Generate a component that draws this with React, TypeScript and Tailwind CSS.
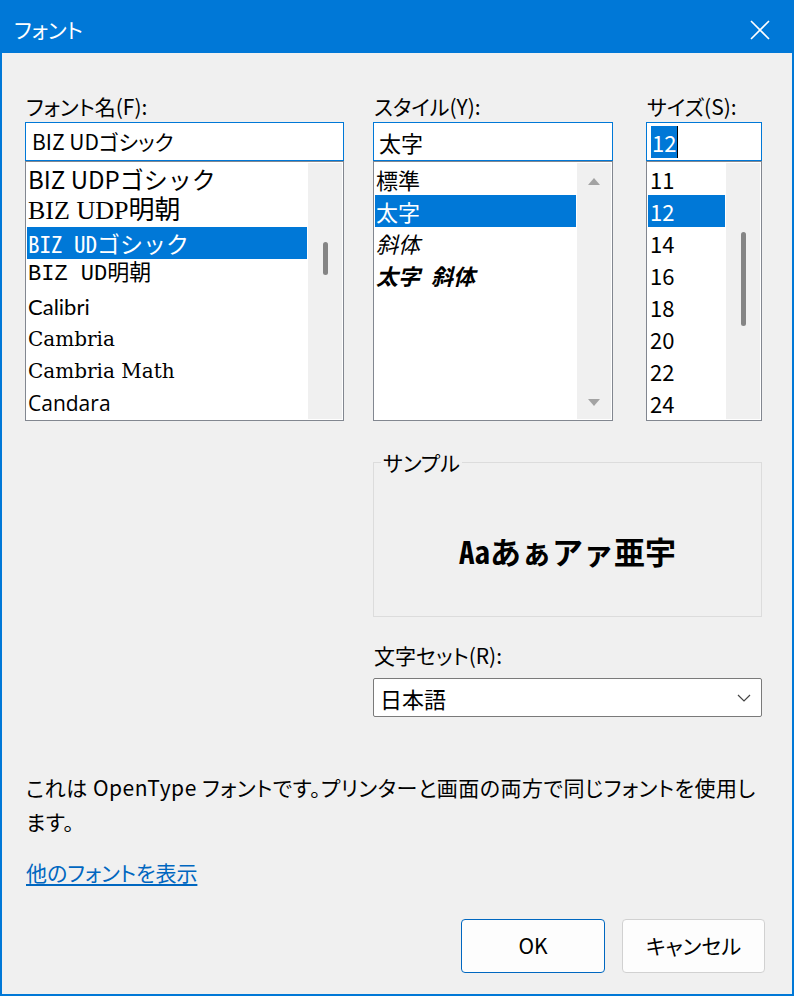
const ui = "font-['Noto_Sans_CJK_JP',sans-serif] [font-feature-settings:'palt']";

function Thumb({ top, height }: { top: number; height: number }) {
  return <div className="w-[5px] rounded-full bg-[#858585]" style={{ marginTop: top, height }} />;
}

function Row({ children, selected, className = '' }: { children: React.ReactNode; selected?: boolean; className?: string }) {
  return (
    <div
      className={
        'h-[32px] shrink-0 flex items-center whitespace-nowrap leading-[32px] ' +
        (selected ? 'bg-[#0078d7] text-white ' : 'text-black ') +
        className
      }
    >
      {children}
    </div>
  );
}

function Label({ children }: { children: React.ReactNode }) {
  return <div className={`${ui} h-[28px] leading-[28px] text-[21px] pl-[1px]`}>{children}</div>;
}

export default function App() {
  return (
    <div className="w-[794px] h-[996px] bg-[#f0f0f0] border-2 border-[#0078d7] flex flex-col text-black overflow-hidden">
      {/* title bar */}
      <div className="h-[51px] shrink-0 bg-[#0078d7] flex items-center justify-between pl-[12px] pr-[22px] text-white">
        <span className={`${ui} text-[21px] leading-none mt-[4px]`}>フォント</span>
        <svg width="20" height="20" viewBox="0 0 20 20" className="mt-[4px]">
          <path d="M1 1 L19 19 M19 1 L1 19" stroke="white" strokeWidth="1.6" fill="none" />
        </svg>
      </div>

      <div className="flex-1 flex flex-col pl-[23px] pr-[27px]">
        <div className="flex mt-[39px]">
          {/* font name */}
          <div className="w-[319px] flex flex-col">
            <Label>フォント名(F):</Label>
            <div className="mt-[2px] h-[39px] border border-[#0078d7] bg-white flex items-center pl-[6px]">
              <span className={`${ui} text-[21px] leading-none`}>BIZ UDゴシック</span>
            </div>
            <div className="h-[260px] border border-[#828790] bg-white flex p-[1px]">
              <div className="flex-1 flex flex-col">
                <Row className="pl-[1px] font-['Noto_Sans_CJK_JP',sans-serif] text-[24px]">BIZ UDPゴシック</Row>
                <Row className="pl-[1px] font-['Liberation_Serif','Noto_Sans_CJK_JP',serif] text-[26px]">BIZ UDP明朝</Row>
                <Row selected className="pl-[1px] font-['Noto_Sans_Mono_CJK_JP','Liberation_Mono','Noto_Sans_CJK_JP',monospace] text-[23px]">
                  BIZ UDゴシック
                </Row>
                <Row className="pl-[1px] font-['Liberation_Mono','Noto_Sans_CJK_JP',monospace] text-[22px]">BIZ UD明朝</Row>
                <Row className="pl-[1px] font-['Lato',sans-serif] text-[22px]">Calibri</Row>
                <Row className="pl-[1px] font-['DejaVu_Serif',serif] text-[20px]">Cambria</Row>
                <Row className="pl-[1px] font-['DejaVu_Serif',serif] text-[20px]">Cambria Math</Row>
                <Row className="pl-[1px] font-['Open_Sans',sans-serif] text-[21px]">Candara</Row>
              </div>
              <div className="w-[34px] ml-[1px] bg-[#f0f0f0] flex flex-col items-center">
                <Thumb top={79} height={33} />
              </div>
            </div>
          </div>

          {/* right part */}
          <div className="ml-[29px] w-[389px] flex flex-col">
            <div className="flex">
              {/* style */}
              <div className="w-[240px] flex flex-col">
                <Label>スタイル(Y):</Label>
                <div className="mt-[2px] h-[39px] border border-[#0078d7] bg-white flex items-center pl-[5px]">
                  <span className="font-['Noto_Sans_CJK_JP',sans-serif] text-[22px] leading-none">太字</span>
                </div>
                <div className="h-[260px] border border-[#828790] bg-white flex p-[1px]">
                  <div className="flex-1 flex flex-col font-['Noto_Sans_CJK_JP',sans-serif] text-[22px]">
                    <Row className="pl-[1px]">標準</Row>
                    <Row selected className="pl-[1px]">太字</Row>
                    <Row className="pl-[1px] italic">斜体</Row>
                    <Row className="pl-[1px] italic font-bold [word-spacing:6px]">太字 斜体</Row>
                  </div>
                  <div className="w-[34px] ml-[1px] bg-[#f0f0f0] flex flex-col items-center justify-between pt-[15px] pb-[13px]">
                    <svg width="12" height="7" viewBox="0 0 12 7">
                      <path d="M6 0 L12 7 L0 7 Z" fill="#a3a3a3" />
                    </svg>
                    <svg width="12" height="7" viewBox="0 0 12 7">
                      <path d="M0 0 L12 0 L6 7 Z" fill="#a3a3a3" />
                    </svg>
                  </div>
                </div>
              </div>

              {/* size */}
              <div className="w-[116px] ml-[33px] flex flex-col">
                <Label>サイズ(S):</Label>
                <div className="mt-[2px] h-[39px] border border-[#0078d7] bg-white flex items-center pl-[4px]">
                  <span className="font-['Noto_Sans_CJK_JP',sans-serif] text-[22px] leading-[32px] h-[32px] px-[1px] bg-[#0078d7] text-white">12</span>
                  <span className="w-[1px] h-[32px] bg-black" />
                </div>
                <div className="h-[260px] border border-[#828790] bg-white flex p-[1px]">
                  <div className="flex-1 flex flex-col font-['Noto_Sans_CJK_JP',sans-serif] text-[22px]">
                    {['11', '12', '14', '16', '18', '20', '22', '24'].map((s) => (
                      <Row key={s} selected={s === '12'} className="pl-[2px]">
                        {s}
                      </Row>
                    ))}
                  </div>
                  <div className="w-[34px] ml-[1px] bg-[#f0f0f0] flex flex-col items-center">
                    <Thumb top={69} height={94} />
                  </div>
                </div>
              </div>
            </div>

            {/* sample */}
            <fieldset className="mt-[30px] border border-[#dcdcdc] block">
              <legend className={`${ui} ml-[7px] px-[2px] text-[21px] leading-[22px]`}>サンプル</legend>
              <div className="h-[143px] flex items-center justify-center pt-[12px]">
                <span className="font-['Noto_Sans_Mono_CJK_JP','Noto_Sans_CJK_JP',sans-serif] font-bold text-[31px] leading-none">
                  Aaあぁアァ亜宇
                </span>
              </div>
            </fieldset>

            <div className="mt-[24px]">
              <Label>文字セット(R):</Label>
            </div>
            <div className="mt-[9px] h-[39px] border border-[#7a7a7a] rounded-[2px] bg-white flex items-center justify-between pl-[6px] pr-[10px]">
              <span className="font-['Noto_Sans_CJK_JP',sans-serif] text-[22px] leading-none">日本語</span>
              <svg width="14" height="8" viewBox="0 0 14 8">
                <path d="M1 1 L7 7 L13 1" stroke="#444" strokeWidth="1.2" fill="none" />
              </svg>
            </div>
          </div>
        </div>

        {/* description */}
        <div className={`${ui} mt-[53px] text-[21px] leading-[34px] pl-[1px] tracking-[0.5px]`}>
          <div className="whitespace-nowrap">これは OpenType フォントです。プリンターと画面の両方で同じフォントを使用し</div>
          <div>ます。</div>
        </div>

        <div className={`${ui} mt-[17px] text-[21px] leading-[34px] pl-[1px]`}>
          <span className="text-[#0067c0] underline underline-offset-[3px]">他のフォントを表示</span>
        </div>

        <div className="mt-[30px] flex justify-end gap-[17px]">
          <button className={`${ui} w-[144px] h-[54px] rounded-[4px] border border-[#0067c0] bg-[#fdfdfd] text-[21px]`}>OK</button>
          <button className={`${ui} w-[143px] h-[54px] rounded-[4px] border border-[#d1d1d1] bg-[#fdfdfd] text-[21px]`}>キャンセル</button>
        </div>
      </div>
    </div>
  );
}
